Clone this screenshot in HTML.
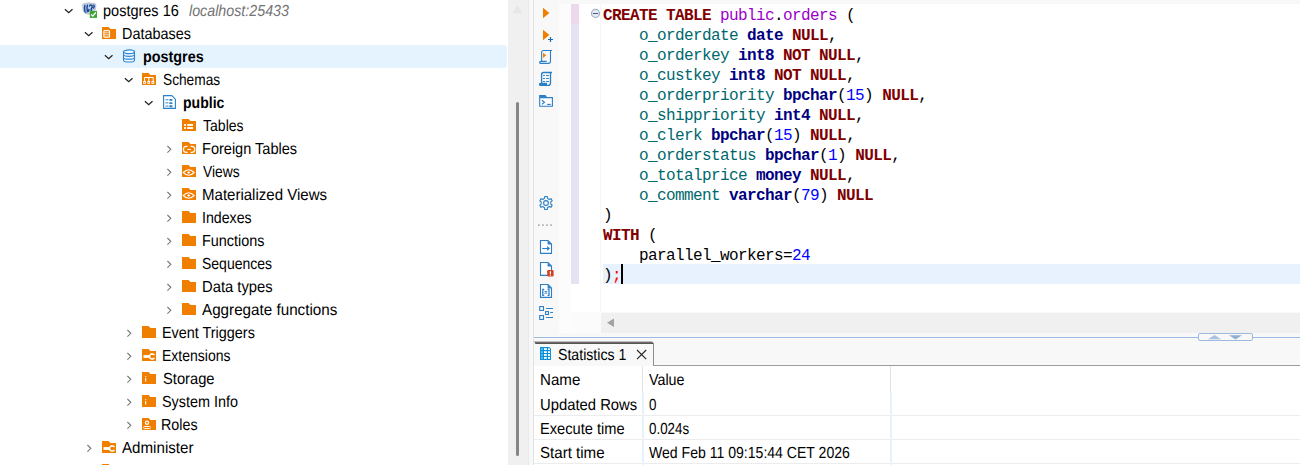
<!DOCTYPE html>
<html><head><meta charset="utf-8"><title>DBeaver</title>
<style>
html,body{margin:0;padding:0}
body{width:1300px;height:465px;overflow:hidden;position:relative;background:#fff;font-family:"Liberation Sans",sans-serif;font-size:16px;color:#000}
div,span,svg{position:absolute}
.t{white-space:pre;line-height:18px;height:18px;transform-origin:0 0;text-rendering:geometricPrecision}
.b{font-weight:bold}
.i{font-style:italic;color:#747474}
svg{overflow:visible}
.code{font-family:"Liberation Mono",monospace;font-size:16px;letter-spacing:-0.6px;line-height:20px;height:20px;white-space:pre;left:603px}
.k{color:#800000;font-weight:bold}
.ty{color:#000080;font-weight:bold}
.c{color:#00686c}
.n{color:#0000ff}
.tb{color:#9a00cc}
.r{color:#ff0000}
</style></head><body>

<div style="left:0;top:45px;width:507px;height:23px;background:#e5f3ff;border-radius:0 3px 3px 0"></div>
<svg style="left:0;top:0" width="1" height="1"><path d="M64.9 9.2L68.7 12.6L72.5 9.2" stroke="#222" stroke-width="1.25" fill="none"/></svg>
<svg style="left:82.2px;top:3.2px" width="16" height="16"><path d="M0.6 2.6Q0.4 0.2 3.2 0.4Q7 -0.8 10.6 0.4Q14.4 -0.2 13.8 3.6Q13.6 7.4 11.6 9.8Q9 11.6 6 11Q2 11.2 1.2 7.2Z" fill="#c4cedd" stroke="#aab6c9" stroke-width="0.7"/><path d="M2.9 2.4Q2.1 5 2.8 8.2M5.4 2.2Q4.4 5.4 5.4 8.6Q6.8 8.8 6.9 6.4M8 2.2Q10.4 1.6 10.2 4Q9 5.4 9.4 8.4M11.8 2.2Q12.6 3.6 11.6 5" stroke="#15479b" stroke-width="1.45" fill="none" stroke-linecap="round"/><circle cx="3.8" cy="9.3" r="0.7" fill="#15479b"/><circle cx="7.4" cy="3.2" r="0.6" fill="#15479b"/><rect x="7.8" y="7.9" width="7.2" height="7" fill="#3fa535"/><path d="M9.2 11.5L10.8 13.1L13.8 9.5" stroke="#fff" stroke-width="1.3" fill="none"/></svg>
<span class="t " style="left:102.88px;top:3px;transform:scaleX(0.9064);">postgres 16</span>
<svg style="left:0;top:0" width="1" height="1"><path d="M84.9 32.2L88.7 35.6L92.5 32.2" stroke="#222" stroke-width="1.25" fill="none"/></svg>
<svg style="left:102px;top:27px" width="14" height="12"><path d="M0 0H6.6L8.4 2H14V12H0Z" fill="#f07f00"/><rect x="1.3" y="3" width="6.8" height="7.8" rx="1.6" fill="#fff"/><path d="M2.4 4.9h4.6M2.4 6.9h4.6M2.4 8.9h4.6" stroke="#f07f00" stroke-width="1.15"/></svg>
<span class="t " style="left:122.20px;top:26px;transform:scaleX(0.9000);">Databases</span>
<svg style="left:0;top:0" width="1" height="1"><path d="M104.9 55.2L108.7 58.6L112.5 55.2" stroke="#222" stroke-width="1.25" fill="none"/></svg>
<svg style="left:122.0px;top:49.2px" width="14" height="14"><path d="M1.5 2.8V11.2C1.5 12.3 4 13 7 13S12.5 12.3 12.5 11.2V2.8" fill="#f4f9fe" stroke="#2b87d3" stroke-width="1.1"/><ellipse cx="7" cy="2.8" rx="5.5" ry="1.9" fill="#f4f9fe" stroke="#2b87d3" stroke-width="1.2"/><path d="M1.5 5.6C1.5 6.7 4 7.4 7 7.4S12.5 6.7 12.5 5.6M1.5 8.4C1.5 9.5 4 10.2 7 10.2S12.5 9.5 12.5 8.4" fill="none" stroke="#2b87d3" stroke-width="1.2"/></svg>
<span class="t b" style="left:142.88px;top:49px;transform:scaleX(0.8976);">postgres</span>
<svg style="left:0;top:0" width="1" height="1"><path d="M124.9 78.2L128.7 81.6L132.5 78.2" stroke="#222" stroke-width="1.25" fill="none"/></svg>
<svg style="left:142px;top:73px" width="14" height="12"><path d="M0 0H6.6L8.4 2H14V12H0Z" fill="#f07f00"/><path d="M2.5 8V4.5H11.2V8M6.85 4.5V8" stroke="#fff" stroke-width="1" fill="none"/><rect x="1.2" y="8" width="2.7" height="2.8" fill="#fff"/><rect x="5.4" y="8" width="2.7" height="2.8" fill="#fff"/><rect x="9.5" y="8" width="2.7" height="2.8" fill="#fff"/><rect x="2.1" y="9" width="0.9" height="0.9" fill="#f07f00"/><rect x="6.3" y="9" width="0.9" height="0.9" fill="#f07f00"/><rect x="10.4" y="9" width="0.9" height="0.9" fill="#f07f00"/></svg>
<span class="t " style="left:162.88px;top:72px;transform:scaleX(0.8568);">Schemas</span>
<svg style="left:0;top:0" width="1" height="1"><path d="M144.9 101.2L148.7 104.6L152.5 101.2" stroke="#222" stroke-width="1.25" fill="none"/></svg>
<svg style="left:162.6px;top:95.4px" width="14" height="14"><path d="M0.6 0.6H8.8L12.4 4.2V13.4H0.6Z" fill="#fff" stroke="#2b80c8" stroke-width="1.1"/><path d="M2.4 4.7h3M2.4 7.9h3M2.4 11h3" stroke="#2b80c8" stroke-width="0.9"/><path d="M6.4 4.9h3M6.4 8.1h3M6.4 11.2h3" stroke="#2b80c8" stroke-width="1.9"/></svg>
<span class="t b" style="left:182.88px;top:95px;transform:scaleX(0.8778);">public</span>
<svg style="left:182px;top:119px" width="14" height="12"><path d="M0 0H6.6L8.4 2H14V12H0Z" fill="#f07f00"/><rect x="2.1" y="5" width="1.8" height="1.9" fill="#fff"/><rect x="5.2" y="5" width="5.8" height="1.9" fill="#fff"/><rect x="2.1" y="8.1" width="1.8" height="1.9" fill="#fff"/><rect x="5.2" y="8.1" width="5.8" height="1.9" fill="#fff"/></svg>
<span class="t " style="left:202.88px;top:118px;transform:scaleX(0.8773);">Tables</span>
<svg style="left:0;top:0" width="1" height="1"><path d="M167.4 146.0L170.8 149.3L167.4 152.6" stroke="#757575" stroke-width="1.05" fill="none"/></svg>
<svg style="left:182px;top:142px" width="14" height="12"><path d="M0 0H6.6L8.4 2H14V12H0Z" fill="#f07f00"/><path d="M5.6 4.4H4.4A3 3 0 0 0 4.4 10.4H5.6M8.6 4.4H9.8A3 3 0 0 1 9.8 10.4H8.6" stroke="#fff" stroke-width="1.1" fill="none"/><path d="M5.2 7.4H9" stroke="#fff" stroke-width="1"/></svg>
<span class="t " style="left:202.20px;top:141px;transform:scaleX(0.9087);">Foreign Tables</span>
<svg style="left:0;top:0" width="1" height="1"><path d="M167.4 169.0L170.8 172.3L167.4 175.6" stroke="#757575" stroke-width="1.05" fill="none"/></svg>
<svg style="left:182px;top:165px" width="14" height="12"><path d="M0 0H6.6L8.4 2H14V12H0Z" fill="#f07f00"/><path d="M1.3 7.5Q6.7 1.9 12.1 7.5Q6.7 13.1 1.3 7.5Z" stroke="#fff" stroke-width="1.1" fill="none"/><path d="M6.7 6.1L8.1 7.5L6.7 8.9L5.3 7.5Z" fill="#fff"/></svg>
<span class="t " style="left:203.10px;top:164px;transform:scaleX(0.8621);">Views</span>
<svg style="left:0;top:0" width="1" height="1"><path d="M167.4 192.0L170.8 195.3L167.4 198.6" stroke="#757575" stroke-width="1.05" fill="none"/></svg>
<svg style="left:182px;top:188px" width="14" height="12"><path d="M0 0H6.6L8.4 2H14V12H0Z" fill="#f07f00"/><path d="M1.3 7.5Q6.7 1.9 12.1 7.5Q6.7 13.1 1.3 7.5Z" stroke="#fff" stroke-width="1.1" fill="none"/><path d="M6.7 6.1L8.1 7.5L6.7 8.9L5.3 7.5Z" fill="#fff"/></svg>
<span class="t " style="left:201.98px;top:187px;transform:scaleX(0.9394);">Materialized Views</span>
<svg style="left:0;top:0" width="1" height="1"><path d="M167.4 215.0L170.8 218.3L167.4 221.6" stroke="#757575" stroke-width="1.05" fill="none"/></svg>
<svg style="left:182px;top:211px" width="14" height="12"><path d="M0 0H6.6L8.4 2H14V12H0Z" fill="#f07f00"/></svg>
<span class="t " style="left:202.20px;top:210px;transform:scaleX(0.8871);">Indexes</span>
<svg style="left:0;top:0" width="1" height="1"><path d="M167.4 238.0L170.8 241.3L167.4 244.6" stroke="#757575" stroke-width="1.05" fill="none"/></svg>
<svg style="left:182px;top:234px" width="14" height="12"><path d="M0 0H6.6L8.4 2H14V12H0Z" fill="#f07f00"/></svg>
<span class="t " style="left:202.20px;top:233px;transform:scaleX(0.9000);">Functions</span>
<svg style="left:0;top:0" width="1" height="1"><path d="M167.4 261.0L170.8 264.3L167.4 267.6" stroke="#757575" stroke-width="1.05" fill="none"/></svg>
<svg style="left:182px;top:257px" width="14" height="12"><path d="M0 0H6.6L8.4 2H14V12H0Z" fill="#f07f00"/></svg>
<span class="t " style="left:202.40px;top:256px;transform:scaleX(0.8749);">Sequences</span>
<svg style="left:0;top:0" width="1" height="1"><path d="M167.4 284.0L170.8 287.3L167.4 290.6" stroke="#757575" stroke-width="1.05" fill="none"/></svg>
<svg style="left:182px;top:280px" width="14" height="12"><path d="M0 0H6.6L8.4 2H14V12H0Z" fill="#f07f00"/></svg>
<span class="t " style="left:202.20px;top:279px;transform:scaleX(0.9238);">Data types</span>
<svg style="left:0;top:0" width="1" height="1"><path d="M167.4 307.0L170.8 310.3L167.4 313.6" stroke="#757575" stroke-width="1.05" fill="none"/></svg>
<svg style="left:182px;top:303px" width="14" height="12"><path d="M0 0H6.6L8.4 2H14V12H0Z" fill="#f07f00"/></svg>
<span class="t " style="left:202.32px;top:302px;transform:scaleX(0.9510);">Aggregate functions</span>
<svg style="left:0;top:0" width="1" height="1"><path d="M127.4 330.0L130.8 333.3L127.4 336.6" stroke="#757575" stroke-width="1.05" fill="none"/></svg>
<svg style="left:142px;top:326px" width="14" height="12"><path d="M0 0H6.6L8.4 2H14V12H0Z" fill="#f07f00"/></svg>
<span class="t " style="left:162.20px;top:325px;transform:scaleX(0.9000);">Event Triggers</span>
<svg style="left:0;top:0" width="1" height="1"><path d="M127.4 353.0L130.8 356.3L127.4 359.6" stroke="#757575" stroke-width="1.05" fill="none"/></svg>
<svg style="left:142px;top:349px" width="14" height="12"><path d="M0 0H6.6L8.4 2H14V12H0Z" fill="#f07f00"/><rect x="1.5" y="6.1" width="6.5" height="2.8" fill="#fff"/><path d="M12.4 6.2A2.6 2.6 0 1 0 12.4 8.8" stroke="#fff" stroke-width="1.6" fill="none"/></svg>
<span class="t " style="left:162.20px;top:348px;transform:scaleX(0.8744);">Extensions</span>
<svg style="left:0;top:0" width="1" height="1"><path d="M127.4 376.0L130.8 379.3L127.4 382.6" stroke="#757575" stroke-width="1.05" fill="none"/></svg>
<svg style="left:142px;top:372px" width="14" height="12"><path d="M0 0H6.6L8.4 2H14V12H0Z" fill="#f07f00"/><rect x="3.1" y="4.1" width="1.1" height="1.1" fill="#fff"/><rect x="3.1" y="6.1" width="1.1" height="3.5" fill="#fff"/></svg>
<span class="t " style="left:162.66px;top:371px;transform:scaleX(0.9197);">Storage</span>
<svg style="left:0;top:0" width="1" height="1"><path d="M127.4 399.0L130.8 402.3L127.4 405.6" stroke="#757575" stroke-width="1.05" fill="none"/></svg>
<svg style="left:142px;top:395px" width="14" height="12"><path d="M0 0H6.6L8.4 2H14V12H0Z" fill="#f07f00"/><rect x="3.1" y="4.1" width="1.1" height="1.1" fill="#fff"/><rect x="3.1" y="6.1" width="1.1" height="3.5" fill="#fff"/></svg>
<span class="t " style="left:162.15px;top:394px;transform:scaleX(0.9000);">System Info</span>
<svg style="left:0;top:0" width="1" height="1"><path d="M127.4 422.0L130.8 425.3L127.4 428.6" stroke="#757575" stroke-width="1.05" fill="none"/></svg>
<svg style="left:142px;top:418px" width="14" height="12"><path d="M0 0H6.6L8.4 2H14V12H0Z" fill="#f07f00"/><circle cx="5" cy="4.8" r="1.6" stroke="#fff" stroke-width="1.2" fill="none"/><rect x="1.6" y="8.5" width="6.9" height="2.1" rx="1" stroke="#fff" stroke-width="1" fill="none"/></svg>
<span class="t " style="left:161.25px;top:417px;transform:scaleX(0.8936);">Roles</span>
<svg style="left:0;top:0" width="1" height="1"><path d="M87.4 445.0L90.8 448.3L87.4 451.6" stroke="#757575" stroke-width="1.05" fill="none"/></svg>
<svg style="left:102px;top:441px" width="14" height="12"><path d="M0 0H6.6L8.4 2H14V12H0Z" fill="#f07f00"/><rect x="1.5" y="6.1" width="6.5" height="2.8" fill="#fff"/><path d="M12.4 6.2A2.6 2.6 0 1 0 12.4 8.8" stroke="#fff" stroke-width="1.6" fill="none"/></svg>
<span class="t " style="left:122.32px;top:440px;transform:scaleX(0.9454);">Administer</span>
<svg style="left:102px;top:464px" width="14" height="12"><path d="M0 0H6.6L8.4 2H14V12H0Z" fill="#f07f00"/></svg>
<span class="t i" style="left:189.18px;top:3px;transform:scaleX(0.8920);">localhost:25433</span>
<div style="left:508px;top:0;width:20px;height:465px;background:#f0f0f0"></div>
<svg style="left:0;top:0" width="1" height="1"><path d="M512.5 13.2L517.5 5.2L522.5 13.2Z" fill="#e6e6e6"/></svg>
<div style="left:516px;top:102px;width:3px;height:354px;background:#868686;border-radius:1.5px"></div>
<div style="left:528px;top:0;width:5px;height:465px;background:#f8f8f8"></div>
<div style="left:528px;top:0;width:1px;height:465px;background:#e9e9e9"></div>
<div style="left:533px;top:0;width:1px;height:465px;background:#e3e3e3"></div>
<div style="left:534px;top:0;width:766px;height:337px;background:#f8f8f8"></div>
<div style="left:559px;top:4px;width:12px;height:329px;background:#fcfcfc"></div>
<div style="left:571px;top:4px;width:729px;height:308px;background:#fff"></div>
<div style="left:571px;top:312px;width:30px;height:21px;background:#fbfbfb"></div>
<div style="left:571px;top:4px;width:8px;height:20px;background:#ecdaec"></div>
<div style="left:571px;top:24px;width:8px;height:260px;background:#e4e3f1"></div>
<div style="left:600px;top:4px;width:1px;height:308px;background:#f6f6f6"></div>
<div style="left:603px;top:264px;width:697px;height:20px;background:#e8f2fe"></div>
<div style="left:601px;top:313px;width:699px;height:20px;background:#f0f0f0"></div>
<svg style="left:0;top:0" width="1" height="1"><path d="M607 322.7L614 318.4V327Z" fill="#a3a3a3"/></svg>
<div class="code" style="top:6px"><span class="k" style="position:static">CREATE TABLE</span> <span class="tb" style="position:static">public</span>.<span class="tb" style="position:static">orders</span> (</div>
<div class="code" style="top:26px">    <span class="c" style="position:static">o_orderdate</span> <span class="ty" style="position:static">date</span> <span class="k" style="position:static">NULL</span>,</div>
<div class="code" style="top:46px">    <span class="c" style="position:static">o_orderkey</span> <span class="ty" style="position:static">int8</span> <span class="k" style="position:static">NOT NULL</span>,</div>
<div class="code" style="top:66px">    <span class="c" style="position:static">o_custkey</span> <span class="ty" style="position:static">int8</span> <span class="k" style="position:static">NOT NULL</span>,</div>
<div class="code" style="top:86px">    <span class="c" style="position:static">o_orderpriority</span> <span class="ty" style="position:static">bpchar</span>(<span class="n" style="position:static">15</span>) <span class="k" style="position:static">NULL</span>,</div>
<div class="code" style="top:106px">    <span class="c" style="position:static">o_shippriority</span> <span class="ty" style="position:static">int4</span> <span class="k" style="position:static">NULL</span>,</div>
<div class="code" style="top:126px">    <span class="c" style="position:static">o_clerk</span> <span class="ty" style="position:static">bpchar</span>(<span class="n" style="position:static">15</span>) <span class="k" style="position:static">NULL</span>,</div>
<div class="code" style="top:146px">    <span class="c" style="position:static">o_orderstatus</span> <span class="ty" style="position:static">bpchar</span>(<span class="n" style="position:static">1</span>) <span class="k" style="position:static">NULL</span>,</div>
<div class="code" style="top:166px">    <span class="c" style="position:static">o_totalprice</span> <span class="ty" style="position:static">money</span> <span class="k" style="position:static">NULL</span>,</div>
<div class="code" style="top:186px">    <span class="c" style="position:static">o_comment</span> <span class="ty" style="position:static">varchar</span>(<span class="n" style="position:static">79</span>) <span class="k" style="position:static">NULL</span></div>
<div class="code" style="top:206px">)</div>
<div class="code" style="top:226px"><span class="k" style="position:static">WITH</span> (</div>
<div class="code" style="top:246px">    parallel_workers=<span class="n" style="position:static">24</span></div>
<div class="code" style="top:266px">)<span class="r" style="position:static">;</span></div>
<svg style="left:0;top:0" width="1" height="1"><circle cx="595.5" cy="13.4" r="3.95" fill="#e9eff7" stroke="#9dabc4" stroke-width="1.2"/><path d="M593 13.5H598" stroke="#4d5d7c" stroke-width="1.1"/></svg>
<div style="left:621px;top:264px;width:2px;height:20px;background:#000"></div>
<svg style="left:0;top:0" width="1" height="1"><path d="M543 7.8V18.2L549.4 13Z" fill="#f07f00"/></svg>
<svg style="left:0;top:0" width="1" height="1"><path d="M543 29.8V40.2L549.4 35Z" fill="#f07f00"/><path d="M548 39.5H553M550.5 37V42" stroke="#1c6cb0" stroke-width="1.2"/></svg>
<svg style="left:0;top:0" width="1" height="1"><path d="M552 50.5H543.6Q541.6 50.5 541.6 52.5V61.4" fill="none" stroke="#2a7fc6" stroke-width="1.1"/><path d="M550.5 50.5V61Q550.5 63.4 548.3 63.4H541Q539.6 63.4 539.6 62.4Q539.6 61.4 541 61.4H546.6" fill="none" stroke="#2a7fc6" stroke-width="1.1"/><path d="M543 52.8V57.9L546.2 55.3Z" fill="#f07f00"/></svg>
<svg style="left:0;top:0" width="1" height="1"><path d="M552 72.5H543.6Q541.6 72.5 541.6 74.5V83.4" fill="none" stroke="#2a7fc6" stroke-width="1.35"/><path d="M550.5 72.5V83Q550.5 85.4 548.3 85.4H541Q539.6 85.4 539.6 84.4Q539.6 83.4 541 83.4H546.6" fill="none" stroke="#2a7fc6" stroke-width="1.35"/><path d="M539.4 83H547V85.4H540.6Q539.4 85.4 539.4 84.2Z" fill="#2a7fc6"/><path d="M543.1 75.5h1.8M546.1 75.5h2.8M543.1 78.5h1.8M546.1 78.5h2.8M543.1 81.5h1.8M546.1 81.5h2.8" stroke="#2a7fc6" stroke-width="1.2"/></svg>
<svg style="left:0;top:0" width="1" height="1"><path d="M539.7 95.6H545.2L546.6 97.6H552.4V106.2H539.7Z" fill="#fff" stroke="#2a7fc6" stroke-width="1.1"/><path d="M539.7 95.6H545.2L546.6 97.6V98.2H539.7Z" fill="#2a7fc6"/><path d="M541.9 100.2L544.5 102.3L541.9 104.4" fill="none" stroke="#2a7fc6" stroke-width="1.1"/><path d="M547.1 104.4H550.8" stroke="#2a7fc6" stroke-width="1.1"/></svg>
<svg style="left:0;top:0" width="1" height="1"><path d="M547.45 198.32L547.31 196.53L544.69 196.53L544.55 198.32L542.67 199.41L541.05 198.63L539.74 200.90L541.22 201.91L541.22 204.09L539.74 205.10L541.05 207.37L542.67 206.59L544.55 207.68L544.69 209.47L547.31 209.47L547.45 207.68L549.33 206.59L550.95 207.37L552.26 205.10L550.78 204.09L550.78 201.91L552.26 200.90L550.95 198.63L549.33 199.41Z" fill="none" stroke="#2a7fc6" stroke-width="1.1" stroke-linejoin="round"/><circle cx="546" cy="203" r="2.4" fill="none" stroke="#2a7fc6" stroke-width="1.1"/></svg>
<svg style="left:0;top:0" width="1" height="1"><rect x="538.0" y="224.4" width="1.6" height="1.4" fill="#9a9a9a"/><rect x="542.1" y="224.4" width="1.6" height="1.4" fill="#9a9a9a"/><rect x="546.2" y="224.4" width="1.6" height="1.4" fill="#9a9a9a"/><rect x="550.3" y="224.4" width="1.6" height="1.4" fill="#9a9a9a"/></svg>
<svg style="left:0;top:0" width="1" height="1"><path d="M540.5 240.5H548L551.5 244V253.4H540.5Z" fill="#fff" stroke="#2a7fc6" stroke-width="1.1"/><path d="M547.6 240.5V244.4H551.5Z" fill="#2a7fc6"/><path d="M542.2 248.5H548" stroke="#2a7fc6" stroke-width="1.1"/><path d="M547.2 246V251L550 248.5Z" fill="#2a7fc6"/></svg>
<svg style="left:0;top:0" width="1" height="1"><path d="M540.5 262.5H548L551.5 266V275.4H540.5Z" fill="#fff" stroke="#2a7fc6" stroke-width="1.1"/><path d="M547.6 262.5V266.4H551.5Z" fill="#2a7fc6"/><rect x="547.2" y="270" width="6.4" height="6.5" rx="1.2" fill="#d1401f"/><path d="M550.4 271.2V274" stroke="#fff" stroke-width="1.2"/><rect x="549.8" y="274.6" width="1.2" height="1.1" fill="#fff"/></svg>
<svg style="left:0;top:0" width="1" height="1"><path d="M540.5 284.5H548L551.5 288V297.4H540.5Z" fill="#fff" stroke="#2a7fc6" stroke-width="1.1"/><path d="M547.6 284.5V288.4H551.5Z" fill="#2a7fc6"/><path d="M544.2 289.3H542.8V295.3H544.2M547.6 289.3H549V295.3H547.6" fill="none" stroke="#2a7fc6" stroke-width="1.25"/><path d="M544.6 291L547.2 293.6M547.2 291L544.6 293.6" stroke="#2a7fc6" stroke-width="1.05"/></svg>
<svg style="left:0;top:0" width="1" height="1"><rect x="539.7" y="306.6" width="3.8" height="3.8" fill="#fff" stroke="#2a7fc6" stroke-width="1.1"/><rect x="545.6" y="311.6" width="2.9" height="2.9" fill="#fff" stroke="#2a7fc6" stroke-width="1.1"/><rect x="539.7" y="315.6" width="3.8" height="3.8" fill="#fff" stroke="#2a7fc6" stroke-width="1.1"/><path d="M546.1 308.5H553M550.2 312.5H553M546.1 317.5H553" stroke="#2a7fc6" stroke-width="1.1"/></svg>
<div style="left:534px;top:337px;width:766px;height:1px;background:#9db9df"></div>
<div style="left:534px;top:338px;width:766px;height:28px;background:#f8f8f8"></div>
<svg style="left:0;top:0" width="1" height="1"><rect x="1198.5" y="333.5" width="54" height="7" rx="1.5" fill="#f8f8f8" stroke="#9db9df" stroke-width="1"/><path d="M1208 339.2L1214.5 335L1221 339.2Z" fill="#a9c0de"/><path d="M1229 335.2H1242L1235.5 339.4Z" fill="#8fafd6"/></svg>
<svg style="left:0;top:0" width="1" height="1"><path d="M534 341H651.8L652.6 342H534Z" fill="#bcbcbc"/><path d="M534.4 342H652.6L653.4 343H535Z" fill="#6c6c6c"/><path d="M535 343H653.4L654 344H535.4Z" fill="#555"/></svg>
<div style="left:653px;top:344px;width:1px;height:22px;background:#8c8c8c"></div>
<div style="left:653px;top:365px;width:647px;height:1px;background:#9c9c9c"></div>
<div style="left:534px;top:366px;width:766px;height:99px;background:#fff"></div>
<svg style="left:540px;top:347px" width="12" height="13"><path d="M0 0H9.2L11 1.8V13H0Z" fill="#0b8fd9"/><rect x="1" y="1.2" width="1.9" height="1.8" fill="#5fc2f1"/><rect x="4" y="1.2" width="2.8" height="1.8" fill="#fff"/><path d="M8 1.2H9.2L10 2V3H8Z" fill="#fff"/><rect x="1" y="4.2" width="1.9" height="1.8" fill="#5fc2f1"/><rect x="4" y="4.2" width="2.8" height="1.8" fill="#fff"/><rect x="8" y="4.2" width="2" height="1.8" fill="#fff"/><rect x="1" y="7.1" width="1.9" height="1.8" fill="#5fc2f1"/><rect x="4" y="7.1" width="2.8" height="1.8" fill="#fff"/><rect x="8" y="7.1" width="2" height="1.8" fill="#fff"/><rect x="1" y="10.0" width="1.9" height="1.8" fill="#5fc2f1"/><rect x="4" y="10.0" width="2.8" height="1.8" fill="#fff"/><rect x="8" y="10.0" width="2" height="1.8" fill="#fff"/></svg>
<span class="t " style="left:557.96px;top:347px;transform:scaleX(0.8839);">Statistics 1</span>
<svg style="left:0;top:0" width="1" height="1"><path d="M637 350L646.2 359.2M646.2 350L637 359.2" stroke="#222" stroke-width="1.1"/></svg>
<div style="left:534px;top:415px;width:766px;height:1px;background:#ececec"></div>
<div style="left:534px;top:439px;width:766px;height:1px;background:#ececec"></div>
<div style="left:534px;top:463px;width:766px;height:1px;background:#ececec"></div>
<div style="left:642px;top:366px;width:1px;height:26px;background:#e3e3e3"></div>
<div style="left:642px;top:392px;width:2px;height:73px;background:#e9f1fb"></div>
<div style="left:890px;top:366px;width:1px;height:26px;background:#e3e3e3"></div>
<div style="left:890px;top:392px;width:2px;height:73px;background:#e9f1fb"></div>
<span class="t " style="left:539.84px;top:372px;transform:scaleX(0.9438);">Name</span>
<span class="t " style="left:649.45px;top:372px;transform:scaleX(0.8936);">Value</span>
<span class="t " style="left:539.84px;top:397px;transform:scaleX(0.9261);">Updated Rows</span>
<span class="t " style="left:649.05px;top:397px;transform:scaleX(0.8330);">0</span>
<span class="t " style="left:539.84px;top:421px;transform:scaleX(0.9141);">Execute time</span>
<span class="t " style="left:649.45px;top:421px;transform:scaleX(0.8344);">0.024s</span>
<span class="t " style="left:540.24px;top:445px;transform:scaleX(0.9423);">Start time</span>
<span class="t " style="left:649.45px;top:445px;transform:scaleX(0.8788);">Wed Feb 11 09:15:44 CET 2026</span>
</body></html>
